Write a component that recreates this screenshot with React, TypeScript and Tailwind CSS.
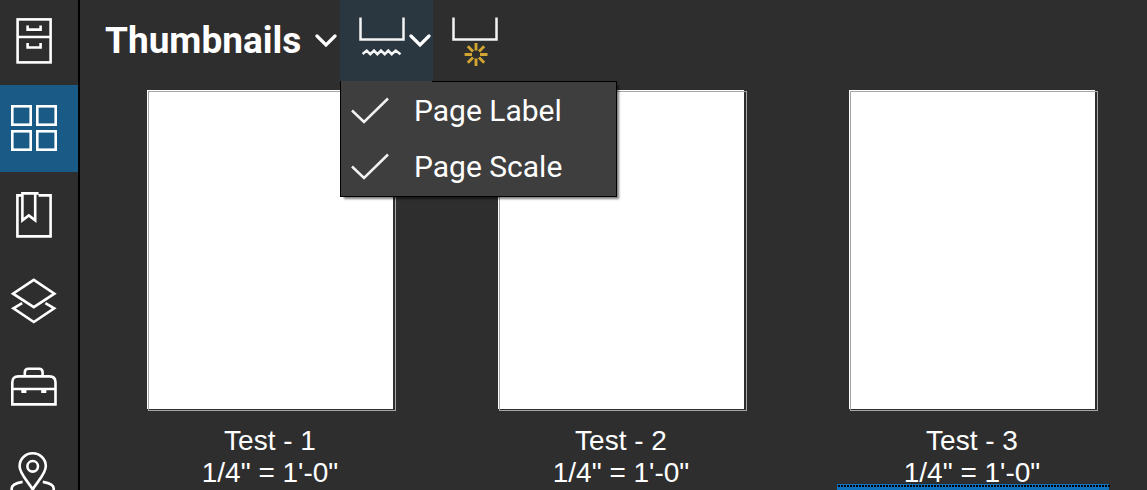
import type { ReactNode } from "react";

const railItems: { label: string; active?: boolean; icon: ReactNode }[] = [
  {
    label: "File access",
    icon: (
      <>
        <rect x="7.6" y="1.4" width="33" height="43" />
        <path d="M7.6 19H40.6M17.6 7.4V11.6H30.6V7.4M17.6 25V29.5H30.6V25" />
      </>
    ),
  },
  {
    label: "Thumbnails",
    active: true,
    icon: (
      <>
        <rect x="2.3" y="2.3" width="18.4" height="18.4" />
        <rect x="27.3" y="2.3" width="18.4" height="18.4" />
        <rect x="2.3" y="27.3" width="18.4" height="18.4" />
        <rect x="27.3" y="27.3" width="18.4" height="18.4" />
      </>
    ),
  },
  {
    label: "Bookmarks",
    icon: (
      <path d="M12.4 4.4H7.4V45.4H40.6V4.4H28.6M28.6 2.4H12.4V29.3L18.8 24.4L25.2 29.3V2.4" />
    ),
  },
  {
    label: "Layers",
    icon: (
      <path d="M23.8 2.8L44.4 16.7L23.8 30.2L3 16.7ZM12.2 26.2L3.4 31.4L23.8 45L44.2 31.4L35.4 26.2" />
    ),
  },
  {
    label: "Tool chest",
    icon: (
      <>
        <path d="M2.3 41.4V19.5Q2.3 13.4 8.4 13.4H39.4Q45.5 13.4 45.5 19.5V41.4ZM2.3 26H45.500M14.8 13.4V9.4Q14.8 5.8 18.4 5.8H29Q32.6 5.8 32.6 9.4V13.4" />
        <path d="M11.3 28.3H16.4M31.2 28.3H36.3" strokeWidth="3.2" />
      </>
    ),
  },
  {
    label: "Spaces",
    icon: (
      <>
        <circle cx="22.7" cy="17.3" r="5.3" />
        <path d="M22.7 40.5C18.5 33 9.6 25 9.6 17.3A13.1 13.1 0 0 1 35.8 17.3C35.8 25 26.9 33 22.7 40.5ZM12.6 32.9C5 34 1.6 36.5 1.6 40C1.6 44 10 47 22.7 47C35.4 47 43.8 44 43.8 40C43.8 36.5 40.4 34 32.8 32.9" />
      </>
    ),
  },
];

const pages = ["Test - 1", "Test - 2", "Test - 3"];
const menuItems = ["Page Label", "Page Scale"];

function Chevron() {
  return (
    <svg viewBox="0 0 22 14" className="h-[14px] w-[22px] shrink-0" fill="none" stroke="#fff" strokeWidth="3.2" aria-hidden="true">
      <path d="M2 2L11 11L20 2" strokeLinecap="round" />
    </svg>
  );
}

function Rail() {
  return (
    <nav className="flex w-20 shrink-0 flex-col border-r-2 border-black">
      {railItems.map((item, i) => (
        <button
          key={item.label}
          type="button"
          aria-label={item.label}
          className={`flex shrink-0 items-start pt-[19px] pl-[10px] ${i === 0 ? "-mt-px" : ""} ${
            item.active ? "h-[87px] bg-[#1a5a86]" : "h-[86px]"
          }`}
        >
          <svg viewBox="0 0 48 48" className="size-12" fill="none" stroke="#fff" strokeWidth="2.6" aria-hidden="true">
            {item.icon}
          </svg>
        </button>
      ))}
    </nav>
  );
}

function Toolbar() {
  return (
    <header className="flex h-[81px] shrink-0 items-stretch">
      <button type="button" className="flex w-[260px] items-center pl-[25px] text-white">
        <span className="text-[37px] leading-[44px] font-bold">Thumbnails</span>
        <span className="ml-auto pr-[3px]">
          <Chevron />
        </span>
      </button>
      <div className="relative">
        <button type="button" aria-label="Label options" aria-expanded="true" className="flex h-full w-[93px] items-center gap-[3px] bg-[#2a3740] pl-[18px]">
          <svg viewBox="0 0 48 48" className="h-12 w-12 shrink-0" fill="none" stroke="#f4f4f4" aria-hidden="true">
            <path d="M2.5 0.5V22.5H45.5V0.5" strokeWidth="2.5" />
            <path d="M4.6 37L8.7 33.6L12.3 37.2L16 33.6L19.400 37.2L23 33.6L26.7 37.2L30.3 33.6L33.7 37.2L37.7 33.6L42.500 37.2" strokeWidth="2.5" />
          </svg>
          <Chevron />
        </button>
        <ul role="menu" className="absolute top-full left-0 z-10 w-[277px] border border-t-0 border-black bg-[#3e3e3e] pt-[2px] pb-px shadow-[3px_3px_2px_-1px_rgba(0,0,0,0.5)]">
          {menuItems.map((label) => (
            <li key={label} role="none">
              <button type="button" role="menuitemcheckbox" aria-checked="true" className="flex h-14 w-full items-center gap-[25px] pl-[10px] text-[30px] leading-9 text-white">
                <svg viewBox="0 0 38 28" className="h-7 w-[38px]" fill="none" stroke="#f2f2f2" strokeWidth="2.5" aria-hidden="true">
                  <path d="M1 13.5L13 25L37 1.500" />
                </svg>
                {label}
              </button>
            </li>
          ))}
          <li role="none" aria-hidden="true" className="absolute top-0 right-0 left-[91px] h-px bg-black" />
        </ul>
      </div>
      <button type="button" aria-label="Create page labels" className="flex w-[88px] items-center pl-[18px]">
        <svg viewBox="0 0 48 50" className="h-[50px] w-12" fill="none" stroke="#f4f4f4" aria-hidden="true">
          <path d="M2.5 1.5V23.5H45.5V1.5" strokeWidth="2.5" />
          <path
            d="M25 27V34.5M25 42.5V50M13.6 38.5H21M29 38.5H36.5M16.8 30.3L22 35.5M33.2 30.3L28 35.5M16.8 46.7L22 41.5M33.2 46.7L28 41.5"
            stroke="#d0a531"
            strokeWidth="2.9"
          />
        </svg>
      </button>
    </header>
  );
}

export default function App() {
  return (
    <div className="flex h-screen overflow-hidden bg-[#2e2e2e] font-['Roboto',sans-serif]">
      <Rail />
      <div className="flex min-w-0 flex-1 flex-col">
        <Toolbar />
        <main className="grid grid-cols-[repeat(auto-fill,274px)] gap-x-[77px] pl-[55px]">
          {pages.map((page) => (
            <figure key={page} className="h-[403px] pt-[9px]">
              <div className="relative mx-3 h-[321px] pr-1 pb-[2px]">
                <div className="h-full bg-white" />
                <div className="absolute inset-0 mt-px mr-px ml-px border border-[#a6a6a6]" />
              </div>
              <figcaption className="pt-[14px] pr-1 text-center font-['Liberation_Sans',Arial,sans-serif] text-[28px] leading-8 text-white">
                <div>{page}</div>
                <div>1/4" = 1'-0"</div>
              </figcaption>
            </figure>
          ))}
          <div className="col-start-3 mr-[2px] h-[403px] bg-[#0f72bd] pt-px">
            <div className="-mr-[2px] ml-px h-[2px] bg-[repeating-linear-gradient(90deg,#000_0_2px,transparent_2px_3px)]" />
          </div>
        </main>
      </div>
    </div>
  );
}
